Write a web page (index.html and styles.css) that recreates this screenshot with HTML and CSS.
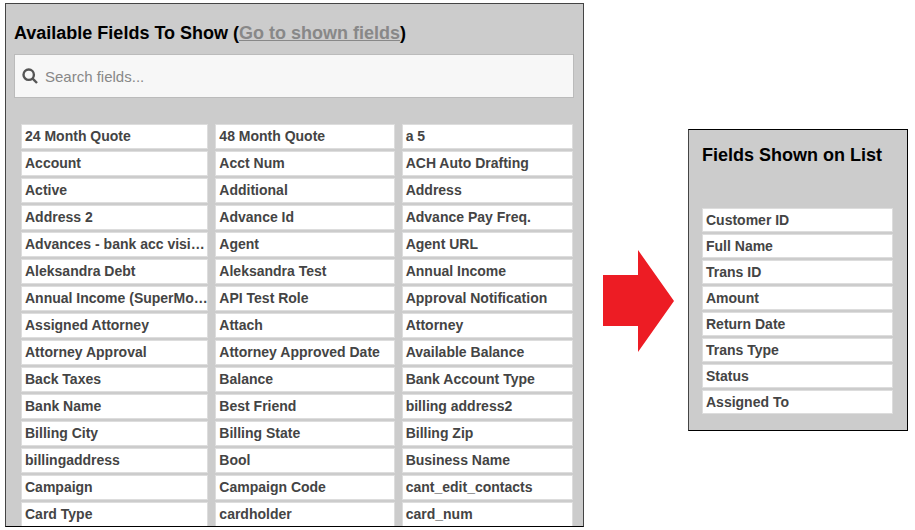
FILE: index.html
```
<!DOCTYPE html>
<html lang="en">
<head>
    <meta charset="UTF-8" />
    <meta name="viewport" content="width=device-width, initial-scale=1.0">
    <title>List Fields</title>
    <link rel="stylesheet" href="styles.css">
</head>
<body>
    <main class="field-picker">
        <!-- Available fields -->
        <section class="panel available-panel">
            <h2>Available Fields To Show (<a href="#shown-fields">Go to shown fields</a>)</h2>

            <div class="search-box">
                <svg class="search-icon" viewBox="0 0 16 16" aria-hidden="true">
                    <circle cx="6.7" cy="6.7" r="5.2" />
                    <path d="M10.4 10.4 L15 15" />
                </svg>
                <input type="text" id="field-search" placeholder="Search fields..." aria-label="Search fields" />
            </div>

            <ul class="field-grid">
                <li>24 Month Quote</li>
                <li>48 Month Quote</li>
                <li>a 5</li>
                <li>Account</li>
                <li>Acct Num</li>
                <li>ACH Auto Drafting</li>
                <li>Active</li>
                <li>Additional</li>
                <li>Address</li>
                <li>Address 2</li>
                <li>Advance Id</li>
                <li>Advance Pay Freq.</li>
                <li>Advances - bank acc visi…</li>
                <li>Agent</li>
                <li>Agent URL</li>
                <li>Aleksandra Debt</li>
                <li>Aleksandra Test</li>
                <li>Annual Income</li>
                <li>Annual Income (SuperMo…</li>
                <li>API Test Role</li>
                <li>Approval Notification</li>
                <li>Assigned Attorney</li>
                <li>Attach</li>
                <li>Attorney</li>
                <li>Attorney Approval</li>
                <li>Attorney Approved Date</li>
                <li>Available Balance</li>
                <li>Back Taxes</li>
                <li>Balance</li>
                <li>Bank Account Type</li>
                <li>Bank Name</li>
                <li>Best Friend</li>
                <li>billing address2</li>
                <li>Billing City</li>
                <li>Billing State</li>
                <li>Billing Zip</li>
                <li>billingaddress</li>
                <li>Bool</li>
                <li>Business Name</li>
                <li>Campaign</li>
                <li>Campaign Code</li>
                <li>cant_edit_contacts</li>
                <li>Card Type</li>
                <li>cardholder</li>
                <li>card_num</li>
            </ul>
        </section>

        <svg class="arrow" viewBox="0 0 71 102" aria-hidden="true">
            <path d="M0 25 H35 V0 L71 51 L35 102 V76 H0 Z" />
        </svg>

        <!-- Shown fields -->
        <section class="panel shown-panel" id="shown-fields">
            <h2>Fields Shown on List</h2>
            <ul class="field-list">
                <li>Customer ID</li>
                <li>Full Name</li>
                <li>Trans ID</li>
                <li>Amount</li>
                <li>Return Date</li>
                <li>Trans Type</li>
                <li>Status</li>
                <li>Assigned To</li>
            </ul>
        </section>
    </main>
</body>
</html>
```
FILE: styles.css
```
:root {
    --panel-color: #cccccc;
    --item-border: #dddddd;
    --text-color: #444444;
    --link-color: #888888;
    --arrow-color: #ed1c24;
}

* {
    margin: 0;
    padding: 0;
    box-sizing: border-box;
}

body {
    font-family: "Liberation Sans", Arial, Helvetica, sans-serif;
    background-color: #fff;
    color: #000;
}

.field-picker {
    display: grid;
    grid-template-columns: minmax(0, 579fr) 76px minmax(0, 220fr);
    column-gap: 14px;
    align-items: start;
    padding: 3px 7px 3px 5px;
}

.panel {
    background-color: var(--panel-color);
    border: 1px solid #000;
    border-left-color: var(--text-color);
}

h2 {
    font-size: 18px;
    line-height: 20px;
    font-weight: 700;
}

h2 a {
    color: var(--link-color);
}

ul {
    list-style: none;
}

li {
    background-color: #fff;
    box-shadow: inset 0 0 0 1px var(--item-border);
    color: var(--text-color);
    font-size: 14px;
    font-weight: 700;
    line-height: 23px;
    padding: 1px 0 1px 4px;
    overflow: hidden;
    text-overflow: ellipsis;
    white-space: nowrap;
}

/* Available fields */
.available-panel {
    border-top-color: var(--text-color);
    border-right-color: var(--text-color);
    padding: 19px 9px 0 8px;
}

.search-box {
    display: flex;
    align-items: center;
    gap: 7px;
    height: 44px;
    margin-top: 11px;
    padding: 0 7px;
    background-color: #f7f7f7;
    border: 1px solid #bbb;
}

.search-icon {
    width: 16px;
    height: 16px;
    fill: none;
    stroke: #555;
    stroke-width: 2.4;
}

.search-box input {
    flex: 1;
    min-width: 0;
    border: 0;
    outline: none;
    background: transparent;
    color: var(--text-color);
    font-family: inherit;
    font-size: 15px;
}

.search-box input::placeholder {
    color: #888;
}

.field-grid {
    display: grid;
    grid-template-columns: 187fr 179fr 171fr;
    gap: 2px 7px;
    margin: 26px 1px 0 7px;
}

/* bottom row runs into the panel edge */
.field-grid li:nth-last-child(-n+3) {
    padding-bottom: 0;
    box-shadow: inset 1px 1px var(--item-border), inset -1px 0 var(--item-border);
}

.arrow {
    width: 76px;
    height: 102px;
    margin-top: 247px;
    padding-left: 5px;
    fill: var(--arrow-color);
}

/* Shown fields */
.shown-panel {
    margin-top: 126px;
    padding: 15px 14px 16px 13px;
}

.field-list {
    display: grid;
    gap: 2px;
    margin-top: 43px;
}

.field-list li {
    line-height: 22px;
}
```
